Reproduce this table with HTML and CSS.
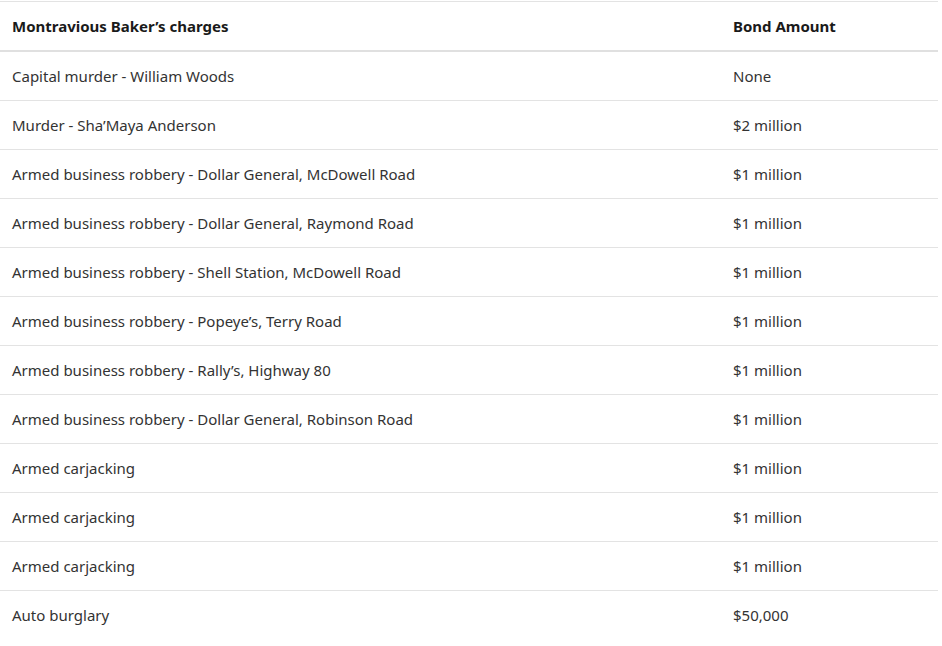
FILE: index.html
```html
<!DOCTYPE html>
<html>
<head>
<meta charset="utf-8">
<link rel="stylesheet" href="styles.css">
</head>
<body>
<table class="charges">
  <thead>
    <tr><th class="c1">Montravious Baker’s charges</th><th class="c2">Bond Amount</th></tr>
  </thead>
  <tbody>
    <tr><td>Capital murder - William Woods</td><td>None</td></tr>
    <tr><td>Murder - Sha’Maya Anderson</td><td>$2 million</td></tr>
    <tr><td>Armed business robbery - Dollar General, McDowell Road</td><td>$1 million</td></tr>
    <tr><td>Armed business robbery - Dollar General, Raymond Road</td><td>$1 million</td></tr>
    <tr><td>Armed business robbery - Shell Station, McDowell Road</td><td>$1 million</td></tr>
    <tr><td>Armed business robbery - Popeye’s, Terry Road</td><td>$1 million</td></tr>
    <tr><td>Armed business robbery - Rally’s, Highway 80</td><td>$1 million</td></tr>
    <tr><td>Armed business robbery - Dollar General, Robinson Road</td><td>$1 million</td></tr>
    <tr><td>Armed carjacking</td><td>$1 million</td></tr>
    <tr><td>Armed carjacking</td><td>$1 million</td></tr>
    <tr><td>Armed carjacking</td><td>$1 million</td></tr>
    <tr class="last"><td>Auto burglary</td><td>$50,000</td></tr>
  </tbody>
</table>
</body>
</html>
```
FILE: styles.css
```css
html, body {
  margin: 0;
  padding: 0;
  background: #ffffff;
}
body {
  padding-top: 1px;
  font-family: "Noto Sans", "Open Sans", sans-serif;
  font-size: 15px;
  color: #333333;
}
.charges {
  width: 938px;
  border-collapse: collapse;
  border-top: 1px solid #e3e3e3;
}
.charges th,
.charges td {
  text-align: left;
  padding: 0 12px;
  height: 48px;
  vertical-align: middle;
}
.charges th {
  font-weight: 700;
  color: #1a1a1a;
  border-bottom: 2px solid #e0e0e0;
}
.charges td {
  border-bottom: 1px solid #e3e3e3;
}
.charges .last td {
  border-bottom: none;
}
.charges .c1 {
  width: 697px;
}
```
